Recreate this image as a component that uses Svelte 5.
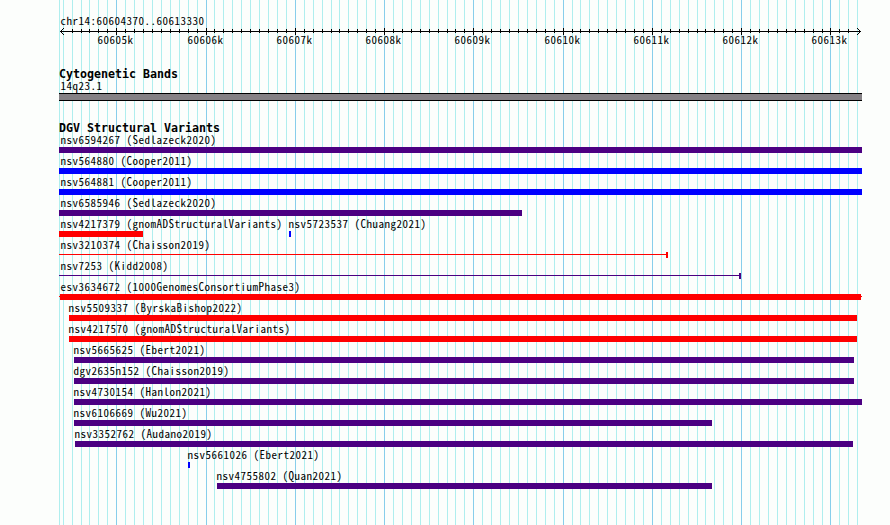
<script>
  const left = 59;
  const firstTick = 116.735;
  const tickStep = 8.928;

  const red = "#ff0000";
  const blue = "#0000ff";
  const indigo = "#4b0082";

  let ticks = [];
  for (let i = -6; i <= 83; i++) {
    ticks.push({ x: Math.floor(firstTick + tickStep * i), major: i % 10 === 0, n: 60605 + i / 10 });
  }
  const majors = ticks.filter((t) => t.major);
  // the outermost ones fall inside the arrow heads
  const rulerTicks = ticks.slice(1, -1);

  // start and end are pixels on the panel
  const rows = [
    [{ name: "nsv6594267 (Sedlazeck2020)", label: 60, start: 59, end: 862, color: indigo }],
    [{ name: "nsv564880 (Cooper2011)", label: 60, start: 59, end: 862, color: blue }],
    [{ name: "nsv564881 (Cooper2011)", label: 60, start: 59, end: 862, color: blue }],
    [{ name: "nsv6585946 (Sedlazeck2020)", label: 60, start: 59, end: 522, color: indigo }],
    [
      { name: "nsv4217379 (gnomADStructuralVariants)", label: 60, start: 59, end: 143, color: red },
      { name: "nsv5723537 (Chuang2021)", label: 288, start: 289, end: 291, color: blue },
    ],
    [{ name: "nsv3210374 (Chaisson2019)", label: 60, start: 59, end: 668, color: red, kind: "capped" }],
    [{ name: "nsv7253 (Kidd2008)", label: 60, start: 59, end: 741, color: indigo, kind: "capped" }],
    [{ name: "esv3634672 (1000GenomesConsortiumPhase3)", label: 60, start: 59, end: 862, color: red, kind: "span" }],
    [{ name: "nsv5509337 (ByrskaBishop2022)", label: 68, start: 69, end: 857, color: red }],
    [{ name: "nsv4217570 (gnomADStructuralVariants)", label: 68, start: 69, end: 857, color: red }],
    [{ name: "nsv5665625 (Ebert2021)", label: 73, start: 74, end: 854, color: indigo }],
    [{ name: "dgv2635n152 (Chaisson2019)", label: 73, start: 74, end: 854, color: indigo }],
    [{ name: "nsv4730154 (Hanlon2021)", label: 73, start: 74, end: 862, color: indigo }],
    [{ name: "nsv6106669 (Wu2021)", label: 73, start: 74, end: 712, color: indigo }],
    [{ name: "nsv3352762 (Audano2019)", label: 74, start: 75, end: 853, color: indigo }],
    [{ name: "nsv5661026 (Ebert2021)", label: 187, start: 188, end: 190, color: blue }],
    [{ name: "nsv4755802 (Quan2021)", label: 216, start: 217, end: 712, color: indigo }],
  ];
</script>

<div class="panel">
  <svg class="gridlines" width="890" height="525" shape-rendering="crispEdges">
    <rect x={left} y="0" width="1" height="525" fill="#afeeee" />
    {#each ticks as t}
      <rect x={t.x} y="0" width="1" height="525" fill={t.major ? "#87ceeb" : "#afeeee"} />
    {/each}
  </svg>

  <div class="content">
    <div class="region">chr14:60604370..60613330</div>
    <svg class="ruler" width="890" height="22" shape-rendering="crispEdges">
      <rect x="60" y="4" width="801" height="1" />
      {#each rulerTicks as t}
        <rect x={t.x} y={t.major ? 1 : 2} width="1" height={t.major ? 7 : 4} />
      {/each}
      <path d="M61 3h1v1h-1zM62 2h1v1h-1zM63 1h1v1h-1zM61 5h1v1h-1zM62 6h1v1h-1zM63 7h1v1h-1z" />
      <path d="M859 3h1v1h-1zM858 2h1v1h-1zM857 1h1v1h-1zM859 5h1v1h-1zM858 6h1v1h-1zM857 7h1v1h-1z" />
      {#each majors as t}
        <text x={t.x - 18.5} y="17">{t.n}k</text>
      {/each}
    </svg>

    <h2 class="cyto">Cytogenetic Bands</h2>
    <div class="bandname">14q23.1</div>
    <div class="band"></div>

    <h2 class="dgv">DGV Structural Variants</h2>
    {#each rows as row}
      <div class="row">
        {#each row as f}
          <div class="feature">
            <div class="name" style="margin-left: {f.label}px">{f.name}</div>
            <div class="bar {f.kind}" style="margin-left: {f.start}px; width: {f.end - f.start}px; color: {f.color}"></div>
          </div>
        {/each}
      </div>
    {/each}
  </div>
</div>

<style>
  :global(body){
    background-color: #fcfefc;
    overflow: hidden;
  }
  .panel{
    position: relative;
    width: 890px;
    height: 525px;
    overflow: hidden;
    background-color: #fcfefc;
    color: #000;
    font-family: "Noto Sans CJK JP", "Liberation Mono", monospace;
    font-feature-settings: "hwid";
    font-size: 11px;
    letter-spacing: 0.5px;
    white-space: nowrap;
  }
  .gridlines{
    position: absolute;
    top: 0;
    left: 0;
  }
  .content{
    position: relative;
    padding-top: 14px;
  }
  .region{
    height: 13px;
    line-height: 13px;
    margin-left: 60px;
    padding-left: 0.5px;
  }
  .ruler{
    display: block;
  }
  h2{
    margin: 0 0 0 59px;
    height: 12px;
    line-height: 12px;
    font-family: "DejaVu Sans Mono", monospace;
    font-feature-settings: normal;
    font-size: 11.63px;
    letter-spacing: 0;
    font-weight: bold;
  }
  .cyto{
    margin-top: 19px;
  }
  .bandname{
    height: 13px;
    line-height: 11px;
    margin-left: 60px;
    padding-left: 0.5px;
  }
  .band{
    box-sizing: border-box;
    width: 803px;
    height: 8px;
    margin-left: 59px;
    background-color: #858185;
    border-top: 1px solid #000;
    border-bottom: 1px solid #000;
  }
  .dgv{
    margin-top: 21px;
    margin-bottom: -1px;
  }
  .row{
    display: grid;
    height: 21px;
  }
  .feature{
    grid-area: 1 / 1;
  }
  .name{
    height: 14px;
    line-height: 13px;
    padding-left: 0.5px;
  }
  .bar{
    box-sizing: border-box;
    height: 6px;
    background-color: currentColor;
  }
  .capped{
    background: linear-gradient(currentColor, currentColor) 0 2px / 100% 1px no-repeat;
    border-right: 2px solid currentColor;
  }
  .span{
    background: linear-gradient(currentColor, currentColor) 0 2px / 100% 1px no-repeat,
      linear-gradient(currentColor, currentColor) 1px 0 / 801px 100% no-repeat;
  }
</style>
